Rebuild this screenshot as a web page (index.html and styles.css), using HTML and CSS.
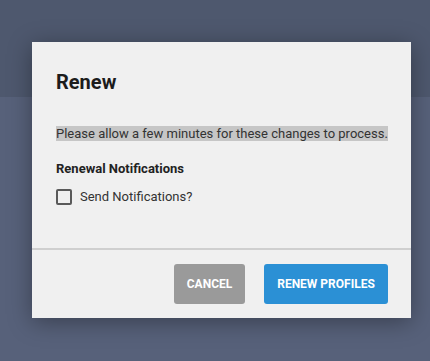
FILE: index.html
```html
<!DOCTYPE html>
<html>
<head>
<meta charset="utf-8">
<link rel="stylesheet" href="styles.css">
</head>
<body>
<div class="page">
  <div class="page-header"></div>
  <div class="page-content"></div>
</div>
<div class="modal">
  <div class="modal-body">
    <h2 class="modal-title">Renew</h2>
    <p class="notice"><span class="notice-text">Please allow a few minutes for these changes to process.</span></p>
    <div class="section-label">Renewal Notifications</div>
    <label class="check-row">
      <span class="checkbox"></span>
      <span class="check-text">Send Notifications?</span>
    </label>
  </div>
  <div class="modal-footer">
    <button class="btn btn-cancel">CANCEL</button>
    <button class="btn btn-primary">RENEW PROFILES</button>
  </div>
</div>
</body>
</html>
```
FILE: styles.css
```css
html, body {
  margin: 0;
  padding: 0;
}
body {
  width: 430px;
  height: 361px;
  overflow: hidden;
  font-family: Roboto, "Liberation Sans", sans-serif;
  background: #57617a;
  position: relative;
}
.page {
  display: flex;
  flex-direction: column;
  height: 361px;
}
.page-header {
  height: 97px;
  background: #4e586e;
}
.page-content {
  flex: 1;
  background: #57617a;
}
.modal {
  position: absolute;
  left: 32px;
  top: 42px;
  width: 379px;
  height: 276px;
  background: #f0f0f0;
  box-shadow: 0 4px 22px rgba(0, 0, 0, 0.35);
  display: flex;
  flex-direction: column;
}
.modal-body {
  padding: 28px 20px 0 24px;
  height: 208px;
  box-sizing: border-box;
  border-bottom: 2px solid #cfcfcf;
}
.modal-title {
  margin: 0;
  font-size: 20px;
  line-height: 24px;
  font-weight: 700;
  color: #1c1c1c;
}
.notice {
  margin: 32px 0 0 0;
  font-size: 13px;
  line-height: 16px;
  color: #333;
  white-space: nowrap;
}
.notice-text {
  background: #c6c6c6;
}
.section-label {
  margin-top: 19px;
  font-size: 13px;
  line-height: 16px;
  font-weight: 700;
  color: #222;
}
.check-row {
  margin-top: 12px;
  display: flex;
  align-items: center;
  gap: 8px;
  height: 16px;
}
.checkbox {
  width: 16px;
  height: 16px;
  box-sizing: border-box;
  border: 2px solid #5a5a5a;
  border-radius: 2px;
}
.check-text {
  font-size: 13px;
  line-height: 16px;
  color: #333;
}
.modal-footer {
  display: flex;
  justify-content: flex-end;
  gap: 19px;
  padding: 14px 23px 0 0;
}
.btn {
  height: 40px;
  border: none;
  border-radius: 3px;
  color: #fff;
  font-family: Roboto, "Liberation Sans", sans-serif;
  font-weight: 700;
  font-size: 12px;
  padding: 0;
}
.btn-cancel {
  width: 71px;
  background: #9a9a9a;
}
.btn-primary {
  width: 124px;
  background: #2b90d5;
}
```
